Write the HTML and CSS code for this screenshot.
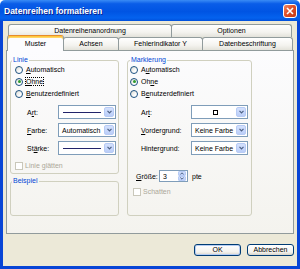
FILE: index.html
```html
<!DOCTYPE html>
<html lang="de">
<head>
    <meta charset="UTF-8">
    <title>Datenreihen formatieren</title>
    <link rel="stylesheet" href="styles.css">
</head>
<body>
    <div class="window">
        <div class="titlebar">
            <span class="title">Datenreihen formatieren</span>
            <span class="close">
                <svg width="8" height="8" viewBox="0 0 8 8"><path d="M1 1L7 7M7 1L1 7" stroke="#fff" stroke-width="1.6"/></svg>
            </span>
        </div>
        <div class="client">
            <div class="tabs">
                <div class="tab-row">
                    <div class="tab w-anordnung">Datenreihenanordnung</div>
                    <div class="tab w-optionen">Optionen</div>
                </div>
                <div class="tab-row">
                    <div class="tab active w-muster">Muster</div>
                    <div class="tab w-achsen">Achsen</div>
                    <div class="tab w-fehler">Fehlerindikator Y</div>
                    <div class="tab w-beschr">Datenbeschriftung</div>
                </div>
            </div>

            <div class="panel">
                <div class="col-left">
                    <fieldset class="group linie">
                        <legend>Linie</legend>
                        <div class="group-body">
                            <div class="radios">
                                <div class="radio"><span class="dot"></span><span><u>A</u>utomatisch</span></div>
                                <div class="radio"><span class="dot checked"></span><span class="focus"><u>O</u>hne</span></div>
                                <div class="radio"><span class="dot"></span><span><u>B</u>enutzerdefiniert</span></div>
                            </div>
                            <div class="fields">
                                <div class="field">
                                    <span class="lbl">A<u>r</u>t:</span>
                                    <div class="combo"><span class="combo-val"><span class="line"></span></span><span class="arrow"><svg width="5" height="4" viewBox="0 0 5 4"><path d="M0.5 0.8L2.5 2.8L4.5 0.8" fill="none" stroke="#4D6185" stroke-width="1.2"/></svg></span></div>
                                </div>
                                <div class="field">
                                    <span class="lbl"><u>F</u>arbe:</span>
                                    <div class="combo"><span class="combo-val">Automatisch</span><span class="arrow"><svg width="5" height="4" viewBox="0 0 5 4"><path d="M0.5 0.8L2.5 2.8L4.5 0.8" fill="none" stroke="#4D6185" stroke-width="1.2"/></svg></span></div>
                                </div>
                                <div class="field">
                                    <span class="lbl">St<u>ä</u>rke:</span>
                                    <div class="combo"><span class="combo-val"><span class="line"></span></span><span class="arrow"><svg width="5" height="4" viewBox="0 0 5 4"><path d="M0.5 0.8L2.5 2.8L4.5 0.8" fill="none" stroke="#4D6185" stroke-width="1.2"/></svg></span></div>
                                </div>
                            </div>
                            <div class="check disabled glaetten"><span class="box"></span><span>Linie glätten</span></div>
                        </div>
                    </fieldset>
                    <fieldset class="group beispiel">
                        <legend>Beispiel</legend>
                    </fieldset>
                </div>

                <fieldset class="group markierung">
                    <legend>Markierung</legend>
                    <div class="group-body">
                        <div class="radios">
                            <div class="radio"><span class="dot"></span><span>A<u>u</u>tomatisch</span></div>
                            <div class="radio"><span class="dot checked"></span><span>Oh<u>n</u>e</span></div>
                            <div class="radio"><span class="dot"></span><span>B<u>e</u>nutzerdefiniert</span></div>
                        </div>
                        <div class="fields">
                            <div class="field">
                                <span class="lbl">Ar<u>t</u>:</span>
                                <div class="combo"><span class="combo-val center"><span class="marker"></span></span><span class="arrow"><svg width="5" height="4" viewBox="0 0 5 4"><path d="M0.5 0.8L2.5 2.8L4.5 0.8" fill="none" stroke="#4D6185" stroke-width="1.2"/></svg></span></div>
                            </div>
                            <div class="field">
                                <span class="lbl"><u>V</u>ordergrund:</span>
                                <div class="combo"><span class="combo-val">Keine Farbe</span><span class="arrow"><svg width="5" height="4" viewBox="0 0 5 4"><path d="M0.5 0.8L2.5 2.8L4.5 0.8" fill="none" stroke="#4D6185" stroke-width="1.2"/></svg></span></div>
                            </div>
                            <div class="field">
                                <span class="lbl">Hinter<u>g</u>rund:</span>
                                <div class="combo"><span class="combo-val">Keine Farbe</span><span class="arrow"><svg width="5" height="4" viewBox="0 0 5 4"><path d="M0.5 0.8L2.5 2.8L4.5 0.8" fill="none" stroke="#4D6185" stroke-width="1.2"/></svg></span></div>
                            </div>
                        </div>
                        <div class="size-row">
                            <span class="lbl"><u>G</u>röße:</span>
                            <div class="spin">
                                <span class="spin-val">3</span>
                                <span class="spin-btns">
                                    <span class="spin-btn"><svg width="4" height="3" viewBox="0 0 4 3"><path d="M0.3 2.5L2 0.8L3.7 2.5" fill="none" stroke="#4D6185" stroke-width="1"/></svg></span>
                                    <span class="spin-btn"><svg width="4" height="3" viewBox="0 0 4 3"><path d="M0.3 0.5L2 2.2L3.7 0.5" fill="none" stroke="#4D6185" stroke-width="1"/></svg></span>
                                </span>
                            </div>
                            <span class="unit">pte</span>
                        </div>
                        <div class="check disabled schatten"><span class="box"></span><span>Schatten</span></div>
                    </div>
                </fieldset>
            </div>

            <div class="buttons">
                <button class="btn default">OK</button>
                <button class="btn">Abbrechen</button>
            </div>
        </div>
    </div>
</body>
</html>
```

FILE: styles.css
```css
* {
    margin: 0;
    padding: 0;
    box-sizing: border-box;
}

body {
    font-family: "Liberation Sans", Arial, sans-serif;
    font-size: 7px;
    color: #000;
    width: 300px;
    height: 269px;
    overflow: hidden;
    background: #fff;
}

.window {
    width: 300px;
    height: 269px;
    display: flex;
    flex-direction: column;
}

/* title bar */
.titlebar {
    height: 21px;
    display: flex;
    align-items: center;
    justify-content: space-between;
    padding: 0 3px 0 4px;
    border-radius: 5px 5px 0 0;
    background: linear-gradient(#3A8CF5, #0A5DE8 18%, #0054E3 55%, #0462EE 85%, #0050DC);
}

.title {
    color: #fff;
    font-weight: bold;
    font-size: 8.5px;
    text-shadow: 1px 1px #0F1F8A;
}

.close {
    width: 14px;
    height: 14px;
    border: 1px solid #fff;
    border-radius: 3px;
    background: linear-gradient(135deg, #F08A65, #E0502A 45%, #C23A14);
    display: flex;
    align-items: center;
    justify-content: center;
}

/* client area */
.client {
    flex: 1;
    background: #ECE9D8;
    border: 3px solid #0845D6;
    border-top: 0;
    padding: 3px 3px 0 3px;
    display: flex;
    flex-direction: column;
}

/* tabs */
.tabs {
    height: 26px;
    padding-left: 2px;
}

.tab-row {
    display: flex;
    height: 13px;
}

.tab {
    height: 13px;
    border: 1px solid #919B9C;
    border-bottom: 0;
    border-radius: 3px 3px 0 0;
    background: linear-gradient(#fff, #F4F3EF 60%, #E3E2DA);
    text-align: center;
    line-height: 12px;
    white-space: nowrap;
}

.tab + .tab {
    margin-left: -1px;
}

.w-anordnung { width: 164px; }
.w-optionen { width: 121px; }
.w-muster { width: 57px; }
.w-achsen { width: 56px; }
.w-fehler { width: 85px; }
.w-beschr { width: 91px; }

.tab.active {
    position: relative;
    z-index: 2;
    height: 16px;
    margin-top: -2px;
    margin-left: -1px;
    background: #FCFCFE;
    border-top: 1px solid #E68B2C;
    box-shadow: inset 0 1px #FFC83C, inset 0 2px #FFD56A;
    line-height: 15px;
}

/* tab page */
.panel {
    height: 184px;
    border: 1px solid #919B9C;
    background: linear-gradient(#FCFCFE, #F4F3EE);
    padding: 5px 0 0 3px;
    display: grid;
    grid-template-columns: 109px 125px;
    column-gap: 8px;
    align-items: start;
}

.group {
    border: 1px solid #D0D0BF;
    border-radius: 3px;
    padding: 0;
    min-width: 0;
}

.group legend {
    color: #0046D5;
    line-height: 8px;
    padding: 0 1px;
    margin-left: 1px;
}

.markierung legend {
    margin-left: 2px;
}

.linie .group-body {
    padding: 0 0 2px 4px;
}

.beispiel {
    margin-top: 3px;
    height: 39px;
}

.markierung {
    height: 160px;
}

.markierung .group-body {
    padding: 0 0 0 2px;
}

/* radios */
.radios {
    display: flex;
    flex-direction: column;
    gap: 1px;
}

.radio {
    display: flex;
    align-items: center;
    gap: 3px;
    height: 11px;
    white-space: nowrap;
}

.dot {
    width: 8px;
    height: 8px;
    border-radius: 50%;
    border: 1px solid #1C5180;
    background: linear-gradient(135deg, #DCDBD3, #fff 70%);
    display: flex;
    align-items: center;
    justify-content: center;
}

.dot.checked::after {
    content: "";
    width: 3px;
    height: 3px;
    border-radius: 50%;
    background: #2F9B2F;
}

.focus {
    outline: 1px dotted #000;
    outline-offset: 0;
}

/* combo rows */
.fields {
    margin-top: 6px;
    display: flex;
    flex-direction: column;
    gap: 4px;
}

.field {
    display: flex;
    align-items: center;
    height: 14px;
    white-space: nowrap;
}

.linie .field {
    padding-left: 12px;
}

.linie .lbl {
    width: 31px;
}

.linie .combo {
    width: 58px;
}

.markierung .field {
    padding-left: 11px;
}

.markierung .field .lbl {
    width: 50px;
}

.markierung .combo {
    width: 57px;
}

.combo {
    height: 14px;
    border: 1px solid #7F9DB9;
    background: #fff;
    display: flex;
    align-items: center;
    padding-right: 1px;
}

.combo-val {
    flex: 1;
    display: flex;
    align-items: center;
    padding-left: 3px;
    overflow: hidden;
}

.combo-val.center {
    justify-content: center;
}

.line {
    flex: 1;
    height: 1px;
    background: #22236A;
    margin: 0 3px 0 1px;
}

.marker {
    width: 5px;
    height: 5px;
    border: 1px solid #000;
}

.arrow {
    width: 10px;
    height: 10px;
    border-radius: 2px;
    border: 1px solid #B7CBF5;
    background: linear-gradient(#D4E1FD, #BBCEF8);
    display: flex;
    align-items: center;
    justify-content: center;
}

/* checkboxes */
.check {
    display: flex;
    align-items: center;
    gap: 2px;
    height: 11px;
}

.check .box {
    width: 8px;
    height: 8px;
    border: 1px solid #C9C7BA;
    background: #fff;
}

.check.disabled {
    color: #ACA899;
}

.glaetten {
    margin-top: 5px;
}

.schatten {
    margin-top: 3px;
    padding-left: 3px;
}

/* size spinner */
.size-row {
    margin-top: 14px;
    height: 14px;
    display: flex;
    align-items: center;
    padding-left: 6px;
}

.size-row .lbl {
    width: 23px;
}

.spin {
    width: 29px;
    height: 12px;
    border: 1px solid #7F9DB9;
    background: #fff;
    display: flex;
    align-items: center;
    padding-right: 1px;
}

.spin-val {
    flex: 1;
    padding-left: 3px;
}

.spin-btns {
    display: flex;
    flex-direction: column;
    width: 8px;
    height: 10px;
}

.spin-btn {
    flex: 1;
    background: linear-gradient(#D4E1FD, #BBCEF8);
    border: 1px solid #B7CBF5;
    border-radius: 1px;
    display: flex;
    align-items: center;
    justify-content: center;
}

.unit {
    margin-left: 4px;
}

/* buttons */
.buttons {
    margin-top: 10px;
    display: flex;
    justify-content: flex-end;
    gap: 6px;
}

.btn {
    width: 47px;
    height: 12px;
    font-family: "Liberation Sans", Arial, sans-serif;
    font-size: 7px;
    color: #000;
    border: 1px solid #003C74;
    border-radius: 3px;
    background: linear-gradient(#fff, #F3F2EE 70%, #D8D3C8);
    line-height: 10px;
}

.btn.default {
    box-shadow: inset 0 0 0 1px #B5CCF3;
}
```
